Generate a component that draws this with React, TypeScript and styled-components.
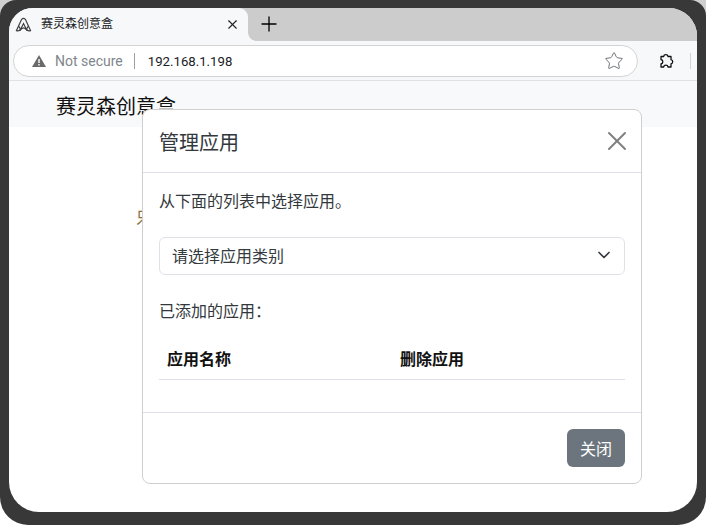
import React from "react";
import styled, { createGlobalStyle } from "styled-components";
import { ChevronDown, Plus, Star, X } from "lucide-react";

const GlobalStyle = createGlobalStyle`
  html, body {
    margin: 0;
    padding: 0;
    background: #fff;
  }
  * { box-sizing: border-box; }
`;

const CJK = `"Liberation Sans", "Noto Sans CJK SC", sans-serif`;

const Screen = styled.div`
  width: 706px;
  height: 525px;
  overflow: hidden;
  background: linear-gradient(#cfcfcf 50%, #fff 50%);
  font-family: ${CJK};
`;

const Bezel = styled.div`
  width: 706px;
  height: 525px;
  padding: 8px 9px 13px;
  background: #383838;
  border-radius: 16px 16px 28px 28px;
`;

const Win = styled.div`
  position: relative;
  height: 504px;
  display: flex;
  flex-direction: column;
  overflow: hidden;
  background: #fff;
  border-radius: 24px 28px 30px 30px;
`;

const TabStrip = styled.div`
  height: 33px;
  flex: none;
  display: flex;
  background: #cccccc;
`;

const Tab = styled.div`
  width: 239px;
  display: flex;
  align-items: center;
  padding: 0 8px 1px 6px;
  background: #f7f8fa;
  border-radius: 0 9px 0 0;
  position: relative;

  &::after {
    content: "";
    position: absolute;
    right: -8px;
    bottom: 0;
    width: 8px;
    height: 8px;
    background: radial-gradient(circle at 100% 0, transparent 7.5px, #f7f8fa 8px);
  }
`;

const TabTitle = styled.span`
  flex: 1;
  margin-left: 9px;
  font-size: 12px;
  line-height: 16px;
  color: #202124;
`;

const NewTab = styled.div`
  width: 42px;
  padding-bottom: 1px;
  display: flex;
  align-items: center;
  justify-content: center;
  color: #000;
`;

const Toolbar = styled.div`
  height: 40px;
  flex: none;
  display: flex;
  align-items: center;
  padding: 1px 0 0 4px;
  background: #f7f8fa;
  border-bottom: 1px solid #dfe1e5;
`;

const Omnibox = styled.div`
  width: 625px;
  height: 32px;
  flex: none;
  display: flex;
  align-items: center;
  padding: 0 13px 0 18px;
  background: #fff;
  border: 1px solid #d3d3d3;
  border-radius: 16px;
`;

const NotSecure = styled.span`
  margin-left: 9px;
  font-size: 14px;
  color: #80868b;
  font-family: Roboto, sans-serif;
`;

const UrlDivider = styled.span`
  width: 1px;
  height: 16px;
  margin: 0 13px 0 11px;
  background: #9aa0a6;
`;

const Url = styled.span`
  flex: 1;
  font-size: 13.2px;
  color: #202124;
  font-family: Roboto, sans-serif;
`;

const ExtensionSlot = styled.div`
  flex: 1;
  display: flex;
  align-items: center;
  justify-content: flex-end;
  gap: 16px;
  padding-right: 6px;
`;

const ToolbarRule = styled.span`
  width: 1px;
  height: 16px;
  background: #d3d3d3;
`;

const PageHeader = styled.div`
  height: 46px;
  flex: none;
  padding: 11px 0 0 47px;
  background: #f8f9fa;
  font-size: 20px;
  line-height: 30px;
  color: #111;
`;

const PageBody = styled.div`
  flex: 1;
  padding: 79px 0 0 127px;
  font-size: 16px;
  line-height: 24px;
  color: #8a6d3b;
`;

const Modal = styled.div`
  position: absolute;
  left: 133px;
  top: 101px;
  width: 500px;
  height: 375px;
  display: flex;
  flex-direction: column;
  background: #fff;
  border: 1px solid #cfcfcf;
  border-radius: 8px;
  color: #33383d;
`;

const ModalHeader = styled.div`
  height: 63px;
  flex: none;
  display: flex;
  align-items: center;
  justify-content: space-between;
  padding: 0 8px 0 16px;
  border-bottom: 1px solid #dee2e6;
  font-size: 20px;
`;

const CloseButton = styled.button`
  padding: 0;
  display: flex;
  background: none;
  border: 0;
  color: #7f7f7f;
`;

const ModalBody = styled.div`
  flex: 1;
  padding: 17px 16px 0;
  font-size: 16px;
`;

const Hint = styled.p`
  margin: 0 0 23px;
  line-height: 24px;
`;

const SelectBox = styled.div`
  height: 38px;
  display: flex;
  align-items: center;
  justify-content: space-between;
  padding: 0 10px 2px 12px;
  border: 1px solid #dee2e6;
  border-radius: 6px;
  color: #343a40;
`;

const ListLabel = styled.p`
  margin: 25px 0 15px;
  line-height: 24px;
`;

const TableHead = styled.div`
  display: grid;
  grid-template-columns: 233px 1fr;
  height: 41px;
  align-items: center;
  padding: 0 0 2px 8px;
  border-bottom: 1px solid #dee2e6;
  font-weight: 700;
  color: #111;
`;

const ModalFooter = styled.div`
  height: 71px;
  flex: none;
  display: flex;
  align-items: center;
  justify-content: flex-end;
  padding: 0 16px;
  border-top: 1px solid #dee2e6;
`;

const SecondaryButton = styled.button`
  width: 58px;
  height: 38px;
  padding: 0;
  background: #6c757d;
  border: 0;
  border-radius: 6px;
  color: #fff;
  font-size: 16px;
  font-family: ${CJK};
`;

const WarningIcon = () => (
  <svg width="14" height="12" viewBox="0 0 14 12">
    <path d="M7 0 14 12H0Z" fill="#6a6a6a" />
    <rect x="6.3" y="4" width="1.4" height="4" fill="#fff" />
    <rect x="6.3" y="9" width="1.4" height="1.5" fill="#fff" />
  </svg>
);

const TabLogo = () => (
  <svg width="17" height="15" viewBox="0 0 18 16" fill="none" stroke="#3c4043" strokeWidth="1.3">
    <path d="M1.5 14.5 7 2.5Q9 .5 11 2.5L16.5 14.5Q13.5 15.5 12 13L9 7 6 13Q4.5 15.5 1.5 14.5Z" />
    <path d="M3.5 9.5 6 13M14.5 9.5 12 13M5 14.5Q9 8.5 13 14.5" />
  </svg>
);

const ExtensionIcon = () => (
  <svg width="16" height="16" viewBox="0 0 16 16" fill="none" stroke="#111" strokeWidth="1.3" strokeLinejoin="round">
    <path d="M3 3.5H5.6a2.3 2.3 0 0 1 4.5 0H13V6.6a2.2 2.2 0 0 1 0 4.3V14H10.1a2.3 2.3 0 0 0-4.5 0H3V11a2.3 2.3 0 0 0 0-4.5Z" />
  </svg>
);

export default function App() {
  return (
    <Screen>
      <GlobalStyle />
      <Bezel>
        <Win>
          <TabStrip>
            <Tab>
              <TabLogo />
              <TabTitle>赛灵森创意盒</TabTitle>
              <X size={15} strokeWidth={1.7} color="#202124" />
            </Tab>
            <NewTab>
              <Plus size={24} strokeWidth={1.3} />
            </NewTab>
          </TabStrip>
          <Toolbar>
            <Omnibox>
              <WarningIcon />
              <NotSecure>Not secure</NotSecure>
              <UrlDivider />
              <Url>192.168.1.198</Url>
              <Star size={20} strokeWidth={1.2} color="#6f7276" />
            </Omnibox>
            <ExtensionSlot>
              <ExtensionIcon />
              <ToolbarRule />
            </ExtensionSlot>
          </Toolbar>
          <PageHeader>赛灵森创意盒</PageHeader>
          <PageBody>只</PageBody>
          <Modal>
            <ModalHeader>
              管理应用
              <CloseButton aria-label="关闭">
                <X size={32} strokeWidth={1.5} />
              </CloseButton>
            </ModalHeader>
            <ModalBody>
              <Hint>从下面的列表中选择应用。</Hint>
              <SelectBox>
                请选择应用类别
                <ChevronDown size={20} strokeWidth={2} color="#343a40" />
              </SelectBox>
              <ListLabel>已添加的应用：</ListLabel>
              <TableHead>
                <span>应用名称</span>
                <span>删除应用</span>
              </TableHead>
            </ModalBody>
            <ModalFooter>
              <SecondaryButton>关闭</SecondaryButton>
            </ModalFooter>
          </Modal>
        </Win>
      </Bezel>
    </Screen>
  );
}
